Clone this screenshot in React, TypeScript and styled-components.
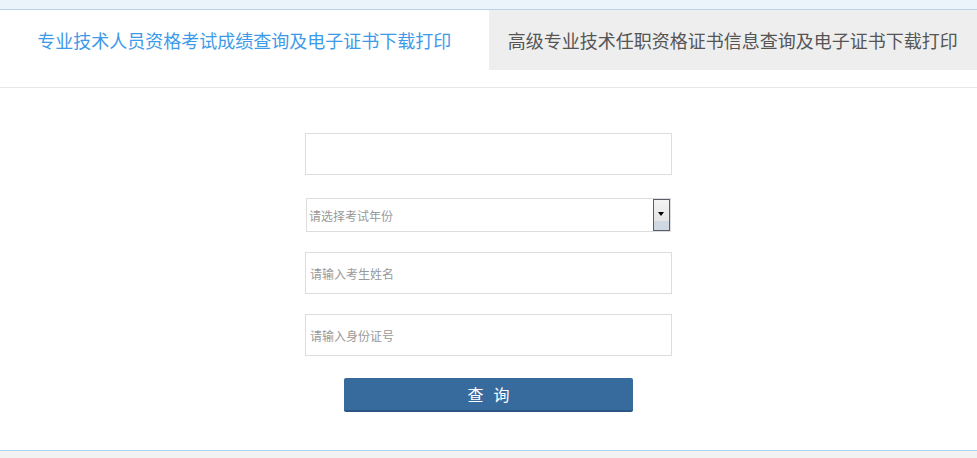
import React from 'react';
import styled, { createGlobalStyle } from 'styled-components';

const GlobalStyle = createGlobalStyle`
  html, body {
    margin: 0;
    padding: 0;
    background: #f2f2f2;
    font-family: "Microsoft YaHei", "Noto Sans CJK SC", sans-serif;
  }
`;

const TopBand = styled.div`
  height: 9px;
  background-color: #ebf3fb;
  border-bottom: 1px solid #b9d3ea;
`;

const Panel = styled.div`
  background-color: #fff;
  border-bottom: 1px solid #acd5f2;
  padding-bottom: 38px;
`;

const Tabs = styled.div`
  display: flex;
  padding-bottom: 17px;
  border-bottom: 1px solid #e8e8e8;
`;

const Tab = styled.div<{ $active?: boolean }>`
  flex: 1;
  height: 60px;
  display: flex;
  align-items: center;
  justify-content: center;
  font-size: 18px;
  white-space: nowrap;
  cursor: pointer;
  color: ${(p) => (p.$active ? '#3d9ae8' : '#555')};
  background-color: ${(p) => (p.$active ? '#fff' : '#eee')};
`;

const Form = styled.form`
  width: 367px;
  margin: 45px auto 0;
  display: flex;
  flex-direction: column;
  align-items: center;
`;

const Field = styled.input<{ $gap?: number }>`
  box-sizing: border-box;
  width: 367px;
  height: 42px;
  margin-top: ${(p) => p.$gap ?? 0}px;
  padding: 0 4px;
  border: 1px solid #ddd;
  outline: none;
  font-family: inherit;
  font-size: 12px;
  color: #333;

  &::placeholder {
    color: #999;
  }
`;

const SelectWrap = styled.div`
  position: relative;
  width: 365px;
  height: 34px;
  margin-top: 23px;
`;

const Select = styled.select`
  box-sizing: border-box;
  width: 100%;
  height: 100%;
  padding: 0 2px;
  border: 1px solid #ddd;
  background: #fff;
  appearance: none;
  outline: none;
  font-family: inherit;
  font-size: 12px;
  color: #999;
`;

const Arrow = styled.span`
  position: absolute;
  top: 1px;
  right: 1px;
  box-sizing: border-box;
  width: 17px;
  height: 32px;
  border: 1px solid #5c5c66;
  background: linear-gradient(#f4f4f4 0%, #e4e4e4 70%, #cfd8e2 70%, #cfd8e2 100%);
  pointer-events: none;

  &::after {
    content: '';
    position: absolute;
    left: 4px;
    top: 12px;
    border-left: 3.5px solid transparent;
    border-right: 3.5px solid transparent;
    border-top: 4px solid #000;
  }
`;

const Button = styled.button`
  box-sizing: border-box;
  width: 289px;
  height: 34px;
  margin-top: 22px;
  border: none;
  border-bottom: 2px solid #2a5682;
  border-radius: 2px;
  background-color: #376b9e;
  color: #fff;
  font-family: inherit;
  font-size: 16px;
  letter-spacing: 10px;
  text-indent: 10px;
  cursor: pointer;
`;

export default function App() {
  return (
    <>
      <GlobalStyle />
      <TopBand />
      <Panel>
        <Tabs>
          <Tab $active>专业技术人员资格考试成绩查询及电子证书下载打印</Tab>
          <Tab>高级专业技术任职资格证书信息查询及电子证书下载打印</Tab>
        </Tabs>
        <Form onSubmit={(e) => e.preventDefault()}>
          <Field type="text" />
          <SelectWrap>
            <Select defaultValue="">
              <option value="">请选择考试年份</option>
            </Select>
            <Arrow />
          </SelectWrap>
          <Field $gap={20} type="text" placeholder="请输入考生姓名" />
          <Field $gap={20} type="text" placeholder="请输入身份证号" />
          <Button type="submit">查询</Button>
        </Form>
      </Panel>
    </>
  );
}
